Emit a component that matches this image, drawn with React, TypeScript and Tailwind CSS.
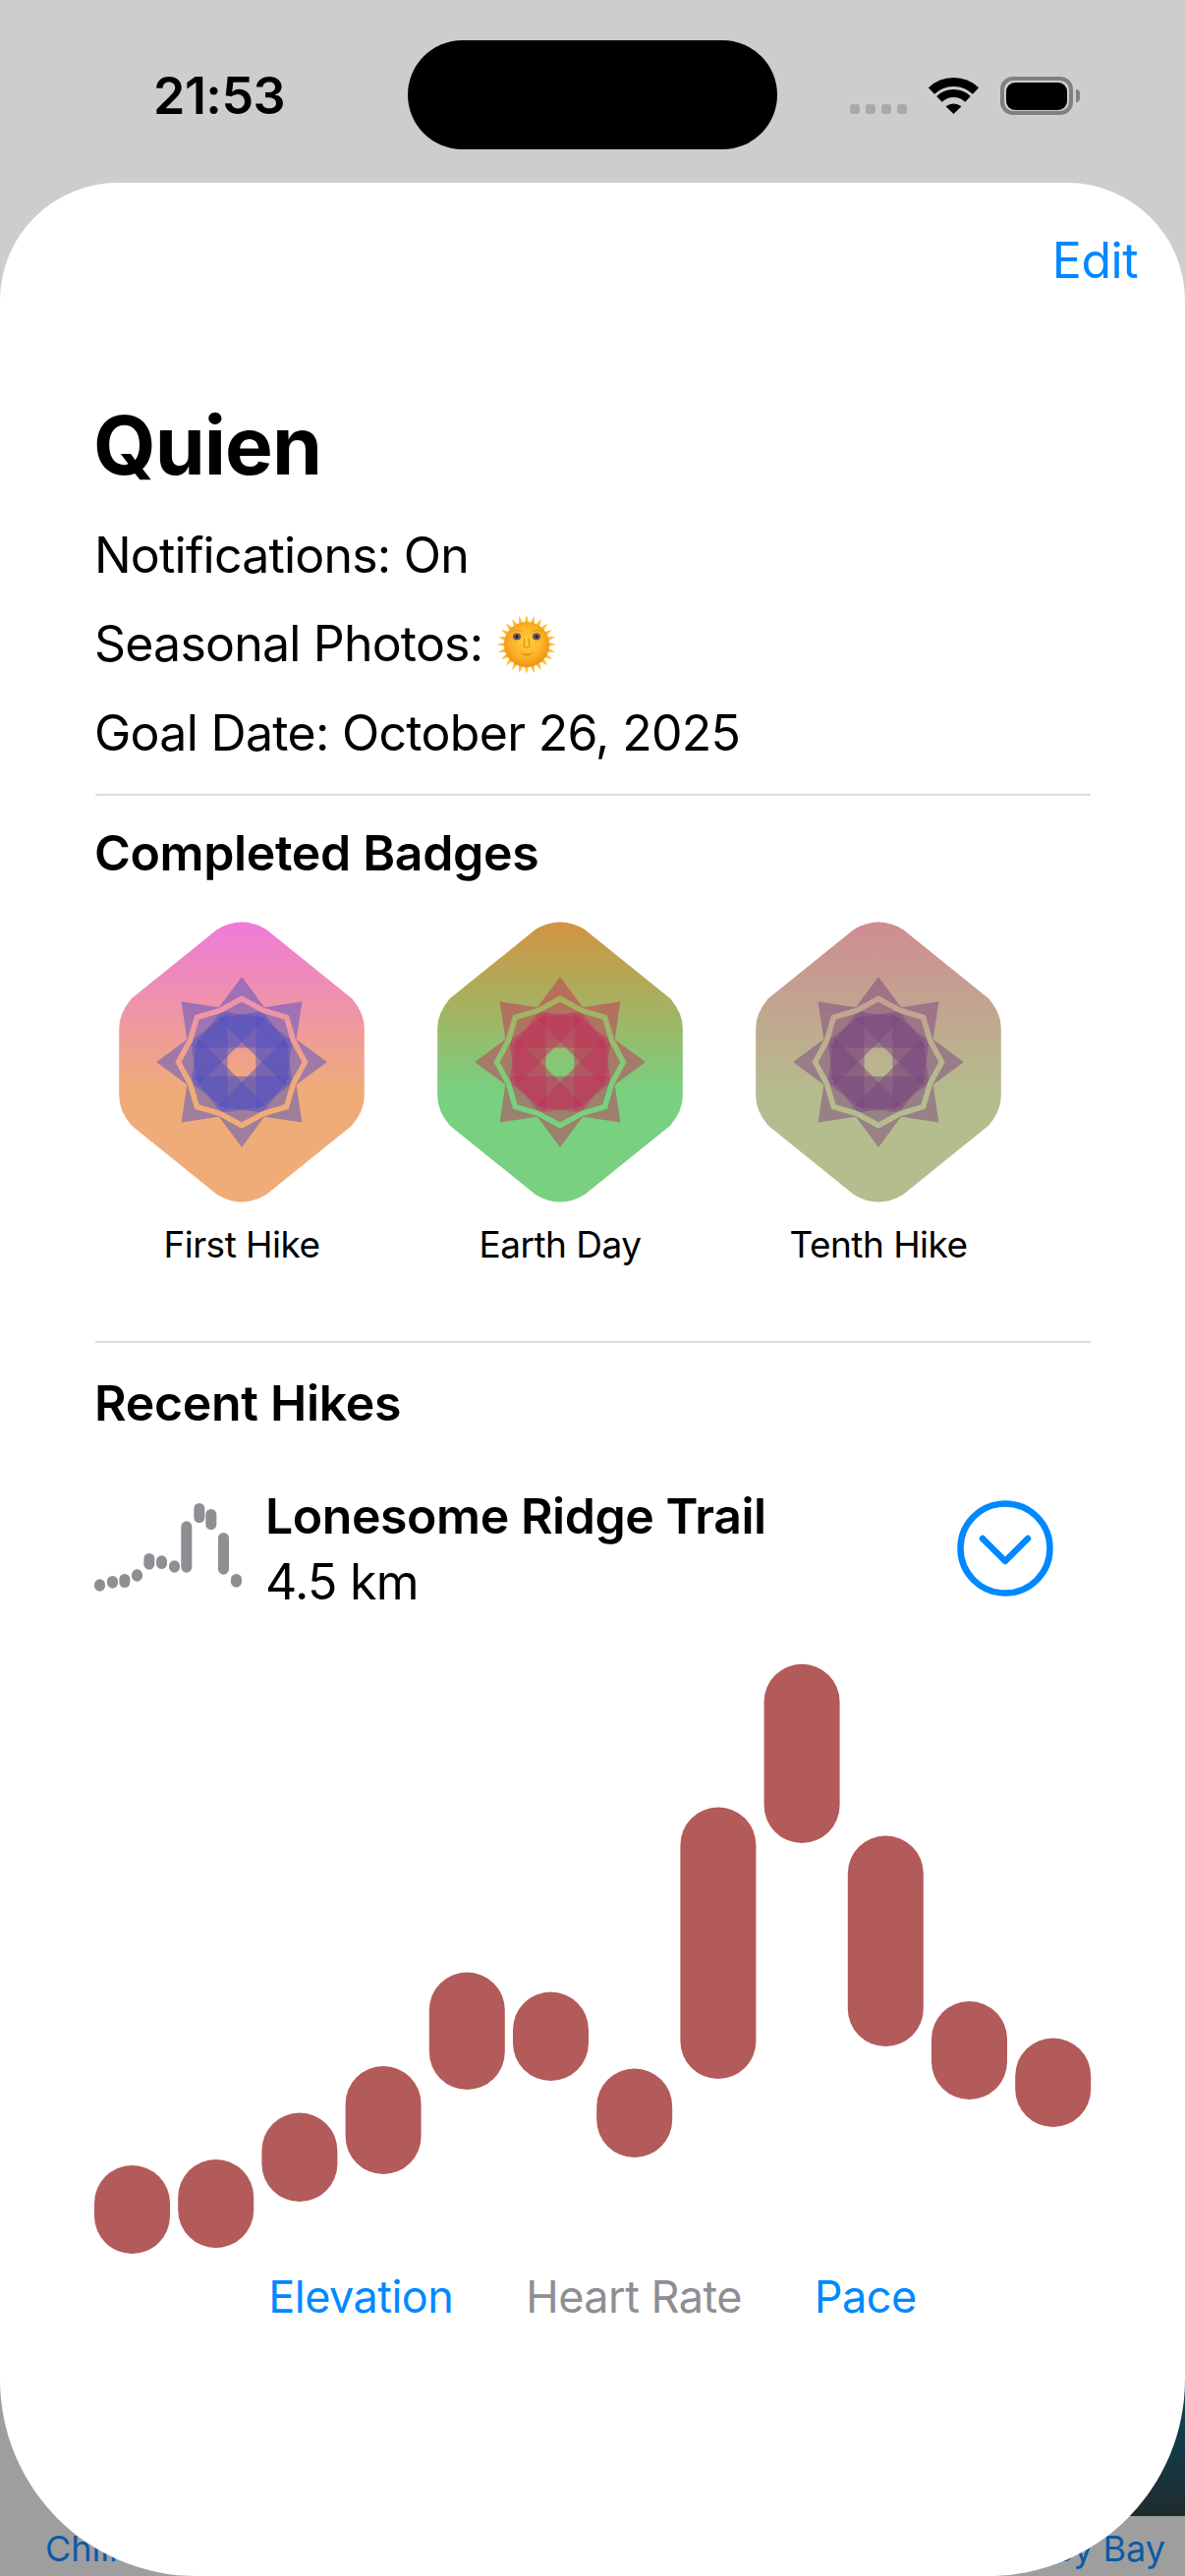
import React from "react";

const FONT = "font-['Inter','Liberation_Sans',sans-serif]";

const HEX = (() => {
  const adj = 0.085;
  const s = 300;
  const sx = 0.832;
  const off = (s * (1 - sx)) / 2;
  const X = (v: number) => (v * s * sx + off).toFixed(2);
  const Y = (v: number) => (v * s).toFixed(2);
  const segs: [number, number, number, number, number, number][] = [
    [0.6, 0.05, 0.4, 0.05, 0.5, 0],
    [0.05, 0.2 + adj, 0, 0.3 + adj, 0, 0.25 + adj],
    [0, 0.7 - adj, 0.05, 0.8 - adj, 0, 0.75 - adj],
    [0.4, 0.95, 0.6, 0.95, 0.5, 1],
    [0.95, 0.8 - adj, 1, 0.7 - adj, 1, 0.75 - adj],
    [1, 0.3 + adj, 0.95, 0.2 + adj, 1, 0.25 + adj],
  ];
  let d = `M${X(0.95)} ${Y(0.2 + adj)}`;
  for (const g of segs) {
    d += ` L${X(g[0])} ${Y(g[1])} Q${X(g[4])} ${Y(g[5])} ${X(g[2])} ${Y(g[3])}`;
  }
  return d + " Z";
})();

const SYMBOL =
  "M0 -86.85 L-23.73 -54.72 L0 -67.635 L23.73 -54.72 Z M0 -61.335 L-23.73 -48.42 L-49.35 -14.4 L49.35 -14.4 L23.73 -48.42 Z";

function Badge({ id, top, bottom, sym, label }: { id: string; top: string; bottom: string; sym: string; label: string }) {
  return (
    <div className="flex w-[300px] flex-col items-center">
      <svg width="300" height="300" viewBox="0 0 300 300">
        <defs>
          <linearGradient id={id} gradientUnits="userSpaceOnUse" x1="150" y1="0" x2="150" y2="180">
            <stop offset="0" stopColor={top} />
            <stop offset="1" stopColor={bottom} />
          </linearGradient>
        </defs>
        <path d={HEX} fill={`url(#${id})`} />
        <g transform="translate(150 150)">
          {[0, 1, 2, 3, 4, 5, 6, 7].map((i) => (
            <path key={i} d={SYMBOL} fill={sym} fillOpacity={0.5} transform={`rotate(${i * 45})`} />
          ))}
        </g>
      </svg>
      <div className="mt-[6px] flex h-[60px] items-center text-[37px] tracking-[-0.014em] text-black">{label}</div>
    </div>
  );
}

function Sun() {
  const rays = Array.from({ length: 24 }, (_, i) => i * 15);
  return (
    <svg width="60" height="60" viewBox="0 0 60 60" className="shrink-0">
      <defs>
        <radialGradient id="sunface" cx="0.5" cy="0.45" r="0.55">
          <stop offset="0" stopColor="#ffcf3e" />
          <stop offset="0.65" stopColor="#fbb226" />
          <stop offset="1" stopColor="#ef8f16" />
        </radialGradient>
      </defs>
      <g transform="translate(30 30)">
        {rays.map((r) => (
          <path key={r} d="M-2.6 -21 L0 -30 L2.6 -21 Z" fill="#fcbf2c" transform={`rotate(${r})`} />
        ))}
        <circle r="23" fill="url(#sunface)" />
        <ellipse cx="-10" cy="-8" rx="4" ry="3.4" fill="#6a5560" />
        <ellipse cx="10" cy="-8" rx="4" ry="3.4" fill="#6a5560" />
        <circle cx="-10" cy="-8" r="1.5" fill="#1e1a22" />
        <circle cx="10" cy="-8" r="1.5" fill="#1e1a22" />
        <path d="M-15 -13 Q-10 -16 -5 -13 M5 -13 Q10 -16 15 -13" stroke="#e69a1c" strokeWidth="1.2" fill="none" />
        <path d="M-2 -6 L-3 2 Q0 4 3 2 L2 -6" stroke="#e08c18" strokeWidth="1.2" fill="none" />
        <path d="M-7 8 Q0 11 7 8 Q0 15 -7 8 Z" fill="#e08c18" />
      </g>
    </svg>
  );
}

function Wifi() {
  const arc = (r: number) => {
    const a = (44 * Math.PI) / 180;
    const x = r * Math.sin(a);
    const y = r * Math.cos(a);
    return `M${25.5 - x} ${37 - y} A${r} ${r} 0 0 1 ${25.5 + x} ${37 - y}`;
  };
  return (
    <svg width="51" height="37" viewBox="0 0 51 37" className="shrink-0">
      <path d={arc(32.5)} stroke="#000" strokeWidth="9" fill="none" />
      <path d={arc(21)} stroke="#000" strokeWidth="8" fill="none" />
      <path d="M25.5 37 L17.5 29.2 Q25.5 23.6 33.5 29.2 Z" fill="#000" />
    </svg>
  );
}

const SPARK: [number, number, number][] = [
  [48, 325, 362],
  [87, 315, 353],
  [124, 309, 351],
  [162, 295, 332],
  [199, 246, 296],
  [237, 253, 294],
  [276, 268, 305],
  [313, 148, 305],
  [352, 93, 153],
  [388, 111, 174],
  [426, 183, 311],
  [465, 309, 350],
];

const BARS: [number, number][] = [
  [2204, 2294],
  [2198, 2288],
  [2150.5, 2241],
  [2103, 2213],
  [2007.5, 2127],
  [2027.5, 2118],
  [2105.5, 2196],
  [1839.5, 2116],
  [1693.7, 1876],
  [1868.5, 2083],
  [2037, 2137],
  [2074.5, 2165],
];

export default function App() {
  return (
    <div
      className={`${FONT} relative h-[2622px] w-[1206px] overflow-hidden bg-[linear-gradient(to_bottom,#cdcdcd_0,#cdcdcd_1000px,#9e9e9e_1000px)] text-black`}
    >
      {/* Status bar */}
      <div className="flex h-[186px] items-start pl-[156px]">
        <div className="mt-[70px] flex h-[56px] w-[259px] items-center text-[52px] font-semibold tracking-[-0.01em] text-black">21:53</div>
        <div className="mt-[41px] h-[111px] w-[376px] rounded-[56px] bg-black" />
        <div className="ml-[74px] mt-[106px] flex gap-[6px]">
          {[0, 1, 2, 3].map((i) => (
            <div key={i} className="h-[10px] w-[10px] rounded-[3px] bg-[#a9a9a9]" />
          ))}
        </div>
        <div className="ml-[22px] mt-[79px]">
          <Wifi />
        </div>
        <div className="ml-[22px] mt-[78px] flex items-center">
          <div className="flex h-[39px] w-[74px] items-center justify-center rounded-[13px] border-[4px] border-[#808080]">
            <div className="h-[28px] w-[62px] rounded-[9px] bg-black" />
          </div>
          <div className="ml-[3px] h-[13px] w-[4px] rounded-r-[4px] bg-[#808080]" />
        </div>
      </div>

      {/* Content peeking out behind the sheet */}
      <div className="absolute bottom-[61px] right-0 h-[160px] w-[110px] bg-[linear-gradient(to_bottom,#0d4a5e,#123b48_55%,#1f2b2d)]" />
      <div className="absolute bottom-[8px] left-[46px] text-[36px] leading-[40px] text-[#0b5aa6]">Chilkoot Trail</div>
      <div className="absolute bottom-[8px] right-[20px] text-[36px] leading-[40px] text-[#0b5aa6]">Icy Bay</div>

      {/* Sheet */}
      <div className="relative h-[2436px] rounded-t-[120px] rounded-b-[200px] bg-white">
        <div className="flex h-[158px] items-center justify-end pr-[48px] text-[50px] tracking-[-0.01em] text-[#0088ff]">Edit</div>
        <div className="px-[97px] pt-[64px]">
          <div className="-ml-[2px] mb-[22px] flex h-[90px] items-center text-[82px] font-bold tracking-[-0.012em]">Quien</div>
          <div className="-ml-px flex h-[90.5px] items-center text-[50px] tracking-[-0.016em]">Notifications: On</div>
          <div className="-ml-px flex h-[90.5px] items-center gap-[15px] text-[50px] tracking-[-0.016em]">
            <span>Seasonal Photos:</span>
            <Sun />
          </div>
          <div className="-ml-px flex h-[90.5px] items-center text-[50px] tracking-[-0.014em]">Goal Date: October 26, 2025</div>
          <div className="mt-[16px] h-[2px] w-[1013px] bg-[#dcdcdc]" />
          <div className="-ml-px mt-[29px] flex h-[60px] items-center text-[50px] font-semibold tracking-[-0.007em]">Completed Badges</div>
          <div className="-ml-px mt-[32.5px] flex gap-[24px]">
            <Badge id="b1" top="#ef78dd" bottom="#efac78" sym="#4f4fbf" label="First Hike" />
            <Badge id="b2" top="#d69140" bottom="#78d080" sym="#bf325a" label="Earth Day" />
            <Badge id="b3" top="#d08a92" bottom="#b5bc8d" sym="#7a4680" label="Tenth Hike" />
          </div>
          <div className="mt-[68px] h-[2px] w-[1013px] bg-[#dcdcdc]" />
          <div className="-ml-px mt-[31px] flex h-[60px] items-center text-[50px] font-semibold tracking-[-0.006em]">Recent Hikes</div>
          <div className="mt-[51px] flex items-start">
            <svg width="151" height="134" viewBox="0 0 151 134" className="-ml-px shrink-0">
              {SPARK.map(([x, y0, y1], i) => (
                <rect key={i} x={x / 3 - 16} y={y0 / 3 - 10} width="11" height={(y1 - y0) / 3} rx="5.5" fill="#8e8e93" />
              ))}
            </svg>
            <div className="ml-[23px] flex flex-1 flex-col">
              <div className="flex h-[68px] items-center text-[50px] font-semibold tracking-[-0.009em]">Lonesome Ridge Trail</div>
              <div className="flex h-[66px] items-center text-[50px] tracking-[-0.014em]">4.5 km</div>
            </div>
            <svg width="98" height="98" viewBox="0 0 98 98" className="mr-[37px] mt-[18px] shrink-0">
              <circle cx="49" cy="49" r="45.5" fill="none" stroke="#0088ff" strokeWidth="6.5" />
              <path d="M26 39 L49 62 L72 39" fill="none" stroke="#0088ff" strokeWidth="6.5" strokeLinecap="round" strokeLinejoin="round" />
            </svg>
          </div>
          <svg width="1013" height="606" viewBox="0 0 1013 606" className="mt-[47px] block overflow-visible">
            {BARS.map(([y0, y1], i) => (
              <rect key={i} x={-1 + i * 85.2} y={y0 - 1690} width="77" height={y1 - y0} rx="38.5" fill="#b35a5a" />
            ))}
          </svg>
          <div className="mt-[12px] flex h-[60px] items-center justify-center gap-[74px] text-[45px] tracking-[-0.012em]">
            <span className="text-[#0088ff]">Elevation</span>
            <span className="text-[#8e8e93]">Heart Rate</span>
            <span className="text-[#0088ff]">Pace</span>
          </div>
        </div>
      </div>
    </div>
  );
}
